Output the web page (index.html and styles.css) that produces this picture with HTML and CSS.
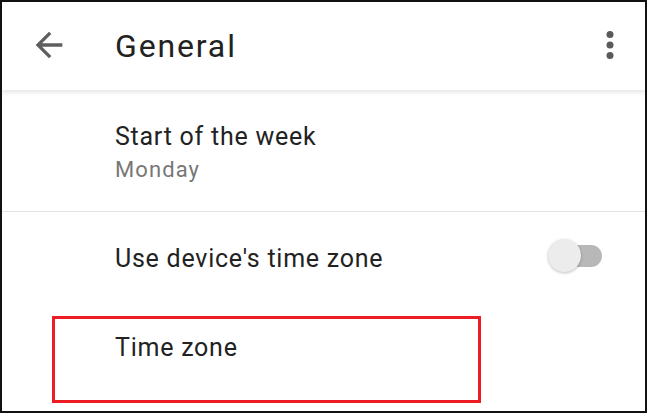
FILE: index.html
```html
<!DOCTYPE html>
<html>
<head>
<meta charset="utf-8">
<link rel="stylesheet" href="styles.css">
</head>
<body>
<div class="frame">
  <header class="appbar">
    <svg class="icon back" viewBox="0 0 24 24" width="40" height="40"><path d="M20 11H7.83l5.59-5.59L12 4l-8 8 8 8 1.41-1.41L7.83 13H20v-2z"/></svg>
    <h1 class="title">General</h1>
    <svg class="icon more" viewBox="0 0 24 24" width="42" height="42"><circle cx="12" cy="6" r="2"/><circle cx="12" cy="12" r="2"/><circle cx="12" cy="18" r="2"/></svg>
  </header>
  <div class="list">
    <div class="row row-two">
      <div class="primary">Start of the week</div>
      <div class="secondary">Monday</div>
    </div>
    <div class="row row-switch">
      <div class="primary">Use device's time zone</div>
      <div class="switch"><span class="track"></span><span class="thumb"></span></div>
    </div>
    <div class="row row-tz">
      <div class="primary">Time zone</div>
    </div>
  </div>
  <div class="highlight"></div>
</div>
</body>
</html>
```
FILE: styles.css
```css
html, body {
  margin: 0;
  padding: 0;
  background: #ffffff;
}
.frame {
  position: relative;
  box-sizing: border-box;
  width: 647px;
  height: 413px;
  border: 2px solid #111111;
  overflow: hidden;
  font-family: Roboto, "Noto Sans", sans-serif;
  color: #222222;
  background: #ffffff;
}
.appbar {
  position: relative;
  z-index: 1;
  box-sizing: border-box;
  height: 88px;
  display: flex;
  align-items: center;
  padding: 0 14px 0 27px;
  background: #ffffff;
  box-shadow: 0 2px 5px rgba(0, 0, 0, 0.12);
}
.icon {
  fill: #5f5f5f;
  flex: none;
}
.back {
  margin-top: -2px;
}
.more {
  margin-top: -2px;
  fill: #5a5a5a;
}
.title {
  flex: 1;
  margin: 0 0 0 46px;
  font-size: 32px;
  font-weight: 400;
  letter-spacing: 1.85px;
  color: #222222;
  line-height: 36px;
}
.list {
  display: flex;
  flex-direction: column;
}
.row {
  box-sizing: border-box;
  padding-left: 113px;
}
.primary {
  font-size: 25px;
  line-height: 30px;
  letter-spacing: 0.75px;
  color: #222222;
}
.secondary {
  font-size: 22px;
  line-height: 36px;
  letter-spacing: 1.1px;
  color: #777777;
}
.row-two {
  height: 122px;
  padding-top: 32px;
  border-bottom: 1px solid #e2e2e2;
}
.row-switch {
  height: 88px;
  display: flex;
  align-items: center;
  justify-content: space-between;
  padding-right: 43px;
}
.row-switch .primary {
  margin-top: 6px;
}
.switch {
  position: relative;
  width: 54px;
  height: 36px;
}
.track {
  position: absolute;
  left: 12px;
  top: 7px;
  width: 42px;
  height: 22px;
  border-radius: 11px;
  background: #b8b8b8;
}
.thumb {
  position: absolute;
  left: 0;
  top: 1px;
  width: 33px;
  height: 33px;
  border-radius: 50%;
  background: #ececec;
  box-shadow: 0 1px 3px rgba(0, 0, 0, 0.25);
}
.row-tz {
  padding-top: 33px;
}
.highlight {
  position: absolute;
  left: 50px;
  top: 314px;
  width: 429px;
  height: 87px;
  box-sizing: border-box;
  border: 3px solid #ed1c24;
}
```
